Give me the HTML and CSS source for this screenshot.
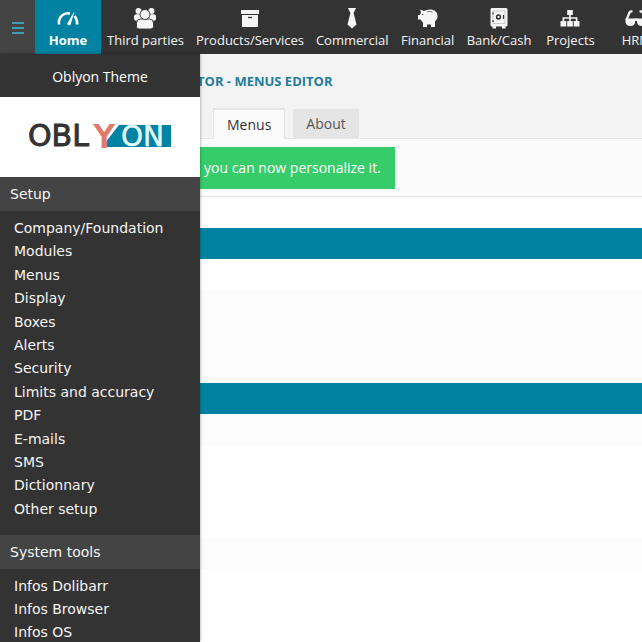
FILE: index.html
```
<!doctype html>
<html lang="en">
<head>
	<meta charset="UTF-8">
	<title>Oblyon Theme</title>
	<link rel="stylesheet" href="styles.css">
</head>
<body>
	<header class="topbar">
		<button type="button" class="toggle" aria-label="Toggle menu">
			<svg width="12" height="12" viewBox="0 0 12 12"><path d="M0 1h12M0 6h12M0 11h12" fill="none" stroke="#3b9fb8" stroke-width="2"/></svg>
		</button>
		<nav class="topnav">
			<a href="#" class="active">
				<svg viewBox="0 0 22 22"><path d="M2 17.500v-1a9 9 0 0 1 11-10M17.500 9q2.700 3 2.700 8.500" fill="none" stroke="#fff" stroke-width="2.600"/><path d="M17.500 4l-3.700 13.300c-.7 2-4 1.200-3.400-1z" fill="#fff"/></svg>
				<span>Home</span>
			</a>
			<a href="#">
				<svg viewBox="0 0 22 22"><g fill="#f5f5f5"><circle cx="4.500" cy="4" r="3"/><circle cx="17.500" cy="4" r="3"/><rect x="0" y="7.300" width="8" height="6.500" rx="2.500"/><rect x="14" y="7.300" width="8" height="6.500" rx="2.500"/></g><g fill="#f5f5f5" stroke="#333" stroke-width=".9"><path d="M2.500 20v-4q0-4 4-4h9q4 0 4 4v3.500q0 2.500-3 2.500h-11q-3 0-3-2z"/><circle cx="11" cy="7.500" r="5"/></g></svg>
				<span>Third parties</span>
			</a>
			<a href="#">
				<svg viewBox="0 0 22 22"><path d="M2 3h18v4H2zM3 8h16v12H3z" fill="#f5f5f5"/><path d="M9 10.500h4" stroke="#333" stroke-width="1.300"/></svg>
				<span>Products/Services</span>
			</a>
			<a href="#">
				<svg viewBox="0 0 22 22"><path d="M7 1h8l-2.400 5 2.900 11.500L11 21.500l-4.500-4L9.400 6z" fill="#f5f5f5"/></svg>
				<span>Commercial</span>
			</a>
			<a href="#">
				<svg viewBox="0 0 22 22"><path d="M3 2.500l4 1.500Q9.500 2.500 13 2.500c4.500 0 7.500 2.500 7.500 6.500 0 2.600-1 4-2.500 5.500V20h-4v-2.500h-4V20H6v-4.300L3.500 12.500H1V8h2l1-2.500z" fill="#f5f5f5"/><path d="M10 4.800q3-.8 5.500.3" fill="none" stroke="#555" stroke-width=".8"/><circle cx="5.700" cy="7.500" r=".7" fill="#333"/></svg>
				<span>Financial</span>
			</a>
			<a href="#">
				<svg viewBox="0 0 22 22"><rect x="2.500" y="1" width="17" height="18.500" rx="1.500" fill="#f5f5f5"/><path d="M4.500 19h3.500v2.500H4.500zM14 19h3.500v2.500H14z" fill="#f5f5f5"/><rect x="5" y="4" width="12" height="12.500" fill="none" stroke="#bbb" stroke-width=".7"/><circle cx="10.500" cy="10" r="1.900" fill="none" stroke="#333" stroke-width="1.500"/><path d="M5 5.500v2M5 13v2M15.500 8v4" stroke="#333" stroke-width="1.200"/></svg>
				<span>Bank/Cash</span>
			</a>
			<a href="#">
				<svg viewBox="0 0 22 22"><path d="M8.200 3h5.600v5H8.200zM1.500 14h5.800v5.500H1.500zM8.200 14h5.600v5.500H8.200zM14.700 14h5.800v5.500h-5.800z" fill="#f5f5f5"/><path d="M11 8v6M4.400 14v-3h13.200v3" fill="none" stroke="#f5f5f5" stroke-width="1.700"/></svg>
				<span>Projects</span>
			</a>
			<a href="#">
				<svg viewBox="0 0 22 22"><path d="M1.500 13L4.500 5.500Q5 4 7.500 4.500M20.500 13l-3-7.500Q17 4 14.500 4.500M9 13.500q2-2 4 0" fill="none" stroke="#f5f5f5" stroke-width="2.200"/><path d="M.5 11.500H10v4q-.5 3.500-4.500 3.500T.5 15.500zM12 11.500h9.500v4q-.5 3.500-4.500 3.500T12 15.500z" fill="#f5f5f5"/></svg>
				<span>HRM</span>
			</a>
		</nav>
	</header>
	<div class="page">
		<aside class="sidebar">
			<p class="company">Oblyon Theme</p>
			<a href="#" class="logo" aria-label="Oblyon">
				<svg width="150" height="50" viewBox="-3 -12 150 50">
					<path d="M91 1h52v22H77v-4z" fill="#0083a2"/>
					<text x="0" y="22" font-size="30" fill="#333" stroke="#333">OBL</text>
					<text x="67" y="23" font-size="30" fill="#e07b6c" stroke="#e07b6c" stroke-width="2">Y</text>
					<text x="93" y="22" font-size="28" fill="#e4f8fb" stroke="#e4f8fb" stroke-width=".5">ON</text>
				</svg>
			</a>
			<h2>Setup</h2>
			<ul class="setup">
				<li><a href="#">Company/Foundation</a></li>
				<li><a href="#">Modules</a></li>
				<li><a href="#">Menus</a></li>
				<li><a href="#">Display</a></li>
				<li><a href="#">Boxes</a></li>
				<li><a href="#">Alerts</a></li>
				<li><a href="#">Security</a></li>
				<li><a href="#">Limits and accuracy</a></li>
				<li><a href="#">PDF</a></li>
				<li><a href="#">E-mails</a></li>
				<li><a href="#">SMS</a></li>
				<li><a href="#">Dictionnary</a></li>
				<li><a href="#">Other setup</a></li>
			</ul>
			<h2>System tools</h2>
			<ul>
				<li><a href="#">Infos Dolibarr</a></li>
				<li><a href="#">Infos Browser</a></li>
				<li><a href="#">Infos OS</a></li>
			</ul>
		</aside>
		<main class="content">
			<h1>TOR - MENUS EDITOR</h1>
			<div class="tabs">
				<a href="#" class="tab current">Menus</a>
				<a href="#" class="tab">About</a>
			</div>
			<div class="notice">
				<p>you can now personalize it.</p>
			</div>
			<div class="rows">
				<div class="row title"></div>
				<div class="row"></div>
				<div class="row shade"></div>
				<div class="row shade"></div>
				<div class="row shade"></div>
				<div class="row title"></div>
				<div class="row shade"></div>
				<div class="row"></div>
				<div class="row"></div>
				<div class="row"></div>
				<div class="row shade"></div>
			</div>
		</main>
	</div>
</body>
</html>
```
FILE: styles.css
```
* { box-sizing: border-box; }
body { display: flex; flex-direction: column; height: 100vh; margin: 0; overflow: hidden; background: #fff; color: #444; font: 14px/20px "Open Sans", "Noto Sans", sans-serif; }
a { color: inherit; text-decoration: none; }
h1, h2, p, ul { margin: 0; padding: 0; font-weight: normal; }
ul { list-style: none; }
svg { display: block; }

/* top menu */
.topbar { display: flex; flex: none; height: 54px; background: #333; }
.toggle { display: flex; flex: none; align-items: center; justify-content: center; width: 35px; padding: 2px 0 0; border: 0; background: #444; }
.topnav { display: flex; flex: 1; min-width: 0; overflow: hidden; color: #f5f5f5; font-size: 13px; }
.topnav a { display: flex; flex: none; flex-direction: column; align-items: center; min-width: 66px; padding: 7px 6px 0; white-space: nowrap; }
.topnav svg { width: 22px; height: 22px; }
.topnav span { margin-top: 1px; }
.topnav .active { background: #0083a2; color: #fff; font-weight: bold; }

.page { display: flex; flex: 1; min-height: 0; }

/* left menu */
.sidebar { position: relative; flex: none; width: 200px; background: #333; box-shadow: 0 0 3px rgba(0,0,0,.4); color: #f5f5f5; font-family: "DejaVu Sans", Verdana, sans-serif; }
.company { padding: 13px 0 10px; color: #fff; font-family: "Open Sans", sans-serif; text-align: center; }
.logo { display: flex; align-items: center; justify-content: center; height: 80px; background: #fff; }
.sidebar h2 { padding: 7px 10px; background: #444; font-size: 14px; }
.sidebar ul { padding: 6px 14px 14px; line-height: 23px; }
.sidebar .setup { display: flex; flex-direction: column; justify-content: space-between; min-height: 324px; }

/* page */
.content { flex: 1; min-width: 0; background: #fff; }
.content h1 { padding: 17px 0; background: #f3f3f3; color: #1f7d99; font-size: 13px; font-weight: bold; text-indent: -3px; }
.tabs { display: flex; align-items: flex-end; gap: 8px; padding-left: 13px; border-bottom: 1px solid #e5e5e5; background: #f3f3f3; }
.tab { padding: 5px 13px 4px; background: #e5e5e5; color: #555; }
.tab.current { margin-bottom: -1px; border: 1px solid #e5e5e5; border-top-width: 2px; border-bottom: 0; background: #fbfbfb; color: #333; }
.notice { display: flex; padding: 8px 0 7px; border-bottom: 1px solid #e5e5e5; background: #fbfbfb; }
.notice p { padding: 11px 14px 11px 4px; background: #36cc69; color: #fff; }
.rows { padding-top: 31px; }
.row { height: 31px; }
.row.title { background: #0083a2; }
.row.shade { background: #fcfcfc; }
```
